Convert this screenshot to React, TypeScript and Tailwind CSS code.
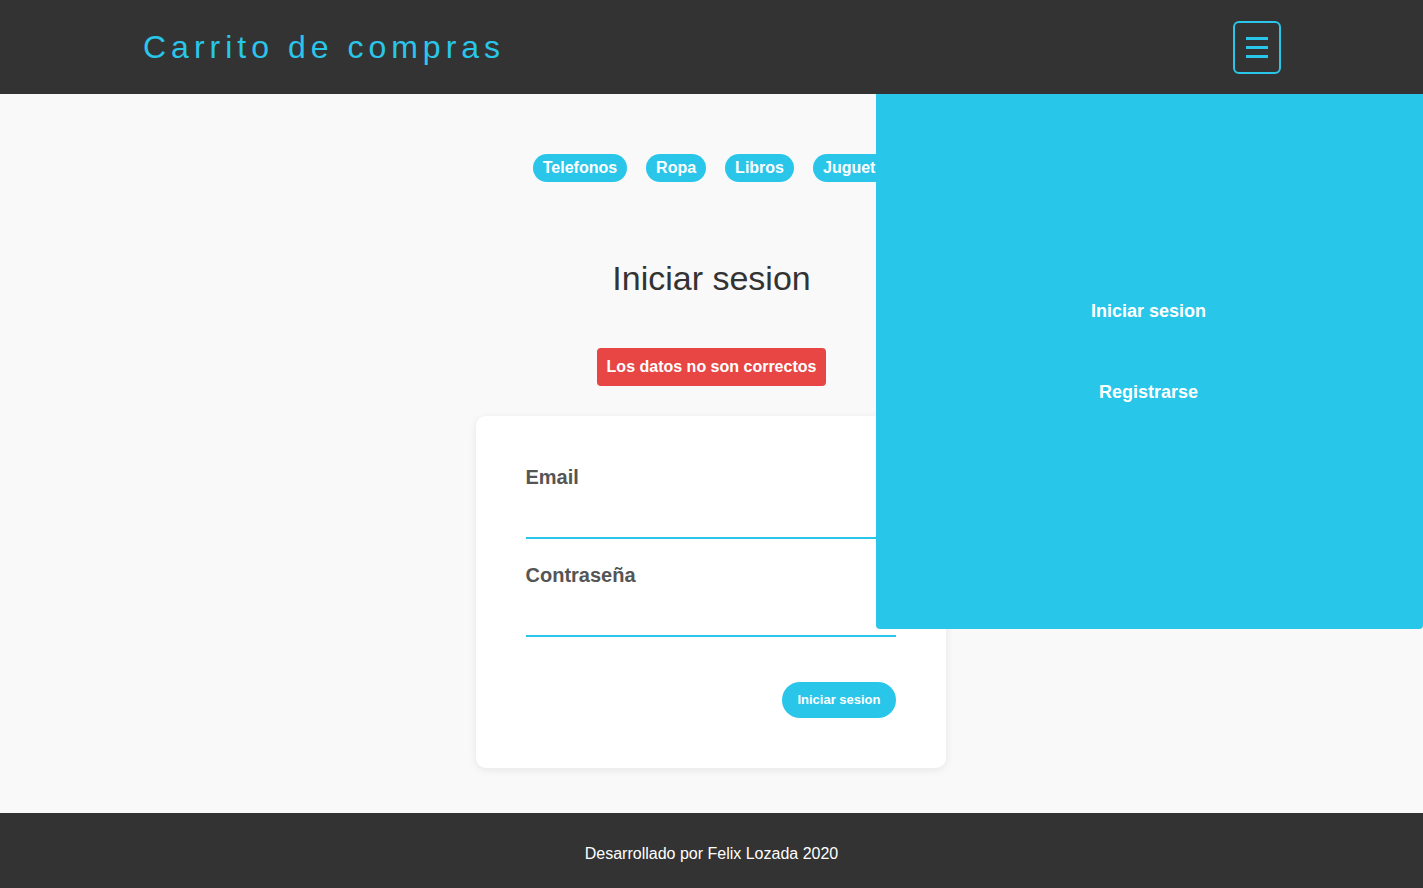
import { useState } from "react";

const categorias = ["Telefonos", "Ropa", "Libros", "Juguetes"];

function Header({ onToggle }: { onToggle: () => void }) {
  return (
    <header className="h-[94px] bg-[#333333] flex items-center justify-between pl-[143px] pr-[142px]">
      <h1 className="text-[32px] leading-none tracking-[5px] text-[#29c6ea] font-normal">
        Carrito de compras
      </h1>
      <button
        onClick={onToggle}
        className="w-[48px] h-[53px] border-2 border-[#29c6ea] rounded-[6px] flex flex-col items-center justify-center gap-[6px]"
      >
        <span className="block w-[22px] h-[3px] bg-[#29c6ea]" />
        <span className="block w-[22px] h-[3px] bg-[#29c6ea]" />
        <span className="block w-[22px] h-[3px] bg-[#29c6ea]" />
      </button>
    </header>
  );
}

function LoginForm() {
  return (
    <div className="w-[470px] bg-white rounded-[10px] shadow-[0_2px_8px_rgba(0,0,0,0.08)] px-[50px] pt-[50px] pb-[50px]">
      <label className="block text-[20px] leading-[23px] font-bold text-[#555555]">Email</label>
      <input
        type="email"
        className="block w-full h-[50px] border-b-2 border-[#29c6ea] outline-none bg-transparent"
      />
      <label className="block mt-[25px] text-[20px] leading-[23px] font-bold text-[#555555]">
        Contraseña
      </label>
      <input
        type="password"
        className="block w-full h-[50px] border-b-2 border-[#29c6ea] outline-none bg-transparent"
      />
      <div className="flex justify-end mt-[45px]">
        <button className="h-[36px] px-[15px] rounded-full bg-[#29c6ea] text-white text-[13px] font-bold">
          Iniciar sesion
        </button>
      </div>
    </div>
  );
}

export default function App() {
  const [menuOpen, setMenuOpen] = useState(true);

  return (
    <div className="min-h-screen flex flex-col font-['Liberation_Sans',Arial,sans-serif]">
      <Header onToggle={() => setMenuOpen(!menuOpen)} />

      <main className="relative flex-1 bg-[#f9f9f9] flex flex-col items-center pt-[60px]">
        <nav className="flex gap-[19px] pl-[13px]">
          {categorias.map((c) => (
            <a
              key={c}
              href="#"
              className="h-[28px] px-[10px] rounded-full bg-[#29c6ea] text-white text-[16px] font-bold flex items-center"
            >
              {c}
            </a>
          ))}
        </nav>

        <h2 className="mt-[73px] text-[34px] leading-[46px] text-[#333333] font-normal">
          Iniciar sesion
        </h2>

        <div className="mt-[47px] h-[38px] px-[10px] rounded-[4px] bg-[#e84545] text-white text-[16px] font-bold flex items-center">
          Los datos no son correctos
        </div>

        <div className="mt-[30px] mb-[45px] pr-[2px]">
          <LoginForm />
        </div>

        {menuOpen && (
          <div className="absolute top-0 right-0 w-[547px] h-[535px] bg-[#28c7ea] rounded-b-[4px] flex flex-col items-center pt-[205px] gap-[57px] pr-[2px]">
            <a href="#" className="text-white text-[18px] leading-[24px] font-bold">
              Iniciar sesion
            </a>
            <a href="#" className="text-white text-[18px] leading-[24px] font-bold">
              Registrarse
            </a>
          </div>
        )}
      </main>

      <footer className="h-[75px] bg-[#333333] flex items-center justify-center pt-[6px]">
        <p className="text-white text-[16px]">Desarrollado por Felix Lozada 2020</p>
      </footer>
    </div>
  );
}
